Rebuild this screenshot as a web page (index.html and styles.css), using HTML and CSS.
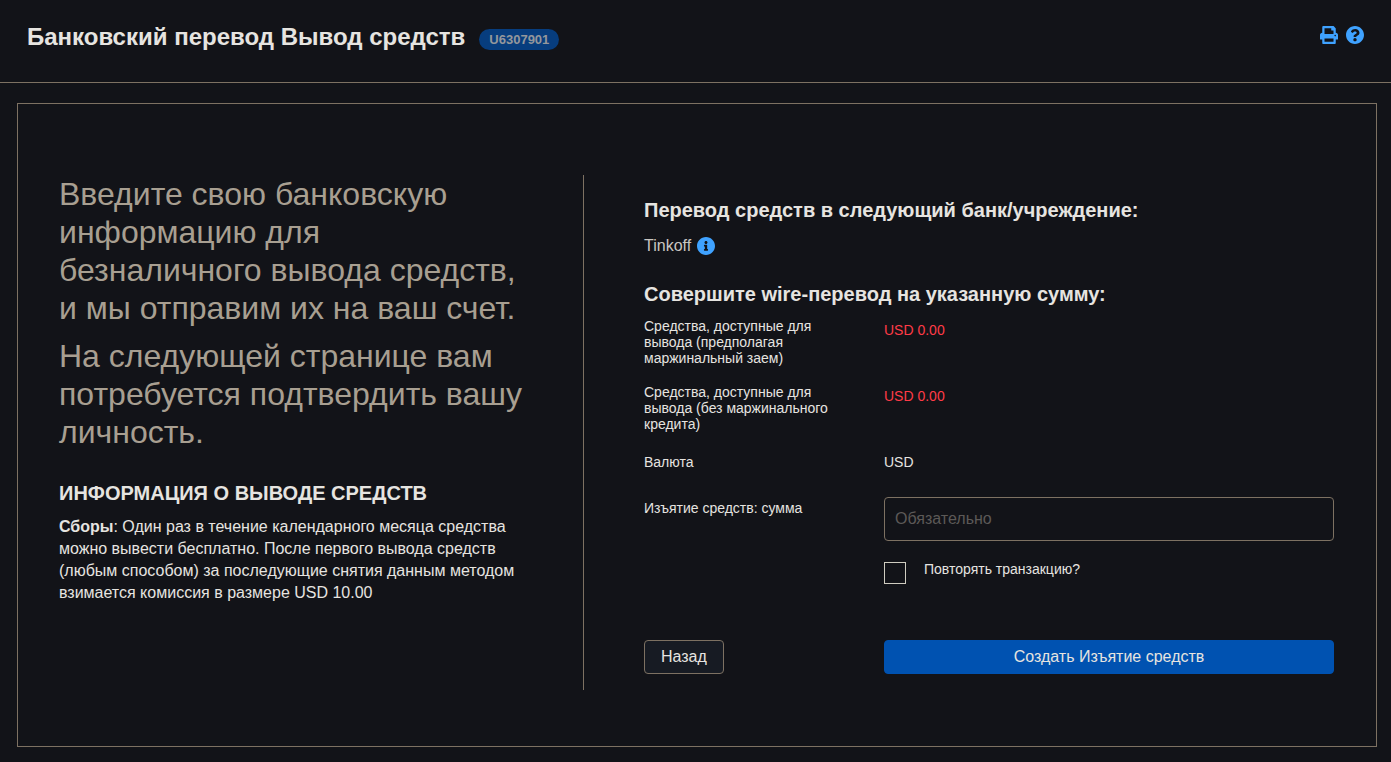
FILE: index.html
```html
<!DOCTYPE html>
<html lang="ru">

<head>
    <meta charset="UTF-8">
    <meta name="viewport" content="width=device-width, initial-scale=1.0">
    <title>Банковский перевод Вывод средств</title>
    <link rel="stylesheet" href="styles.css">
</head>

<body>
<header class="header">
    <h1 class="title">Банковский перевод Вывод средств</h1>
    <span class="account">U6307901</span>
    <div class="tools">
        <button type="button" class="icon-btn" aria-label="Печать">
            <svg viewBox="0 0 512 512"><path d="M448 192V77.25c0-8.49-3.37-16.62-9.37-22.63L393.37 9.37c-6-6-14.14-9.37-22.63-9.37H96C78.33 0 64 14.33 64 32v160c-35.35 0-64 28.65-64 64v112c0 8.84 7.16 16 16 16h48v96c0 17.67 14.33 32 32 32h320c17.67 0 32-14.33 32-32v-96h48c8.84 0 16-7.16 16-16V256c0-35.35-28.65-64-64-64zm-64 256H128v-96h256v96zm0-224H128V64h192v48c0 8.84 7.16 16 16 16h48v96zm48 72c-13.25 0-24-10.75-24-24 0-13.26 10.75-24 24-24s24 10.74 24 24c0 13.25-10.75 24-24 24z"/></svg>
        </button>
        <button type="button" class="icon-btn" aria-label="Помощь">
            <svg viewBox="8 8 496 496"><path d="M504 256c0 136.997-111.043 248-248 248S8 392.997 8 256C8 119.083 119.043 8 256 8s248 111.083 248 248zM262.655 90c-54.497 0-89.255 22.957-116.549 63.758-3.536 5.286-2.353 12.415 2.715 16.258l34.699 26.31c5.205 3.947 12.621 3.008 16.665-2.122 17.864-22.658 30.113-35.797 57.303-35.797 20.429 0 45.698 13.148 45.698 32.958 0 14.976-12.363 22.667-32.534 33.976C247.128 238.528 216 254.941 216 296v4c0 6.627 5.373 12 12 12h56c6.627 0 12-5.373 12-12v-1.333c0-28.462 83.186-29.647 83.186-106.667 0-58.002-60.165-102-116.531-102zM256 338c-25.365 0-46 20.635-46 46 0 25.364 20.635 46 46 46s46-20.636 46-46c0-25.365-20.635-46-46-46z"/></svg>
        </button>
    </div>
</header>

<main class="panel">
    <section class="info">
        <p class="lead">Введите свою банковскую информацию для<br>безналичного вывода средств, и&nbsp;мы отправим их на ваш счет.</p>
        <p class="lead">На следующей странице вам потребуется подтвердить вашу личность.</p>
        <h2 class="info-title">ИНФОРМАЦИЯ О ВЫВОДЕ СРЕДСТВ</h2>
        <p class="fees"><b>Сборы</b>: Один раз в течение календарного месяца средства можно вывести бесплатно. После первого вывода средств (любым способом) за последующие снятия данным методом взимается комиссия в размере USD 10.00</p>
    </section>

    <form class="transfer">
        <h2>Перевод средств в следующий банк/учреждение:</h2>
        <div class="bank">
            <span>Tinkoff</span>
            <button type="button" class="icon-btn" aria-label="Информация о банке">
                <svg viewBox="8 8 496 496"><path d="M256 8C119.043 8 8 119.083 8 256c0 136.997 111.043 248 248 248s248-111.003 248-248C504 119.083 392.957 8 256 8zm0 110c23.196 0 42 18.804 42 42s-18.804 42-42 42-42-18.804-42-42 18.804-42 42-42zm56 254c0 6.627-5.373 12-12 12h-88c-6.627 0-12-5.373-12-12v-24c0-6.627 5.373-12 12-12h12v-64h-12c-6.627 0-12-5.373-12-12v-24c0-6.627 5.373-12 12-12h64c6.627 0 12 5.373 12 12v100h12c6.627 0 12 5.373 12 12v24z"/></svg>
            </button>
        </div>
        <h2>Совершите wire-перевод на указанную сумму:</h2>

        <div class="row">
            <span class="label">Средства, доступные для вывода (предполагая маржинальный заем)</span>
            <span class="value negative">USD 0.00</span>
        </div>
        <div class="row">
            <span class="label">Средства, доступные для вывода (без маржинального кредита)</span>
            <span class="value negative">USD 0.00</span>
        </div>
        <div class="row row-currency">
            <span class="label">Валюта</span>
            <span class="value">USD</span>
        </div>
        <div class="row row-amount">
            <label class="label" for="amount">Изъятие средств: сумма</label>
            <input type="text" class="amount" id="amount" placeholder="Обязательно">
        </div>
        <div class="row">
            <div class="repeat">
                <input type="checkbox" class="check" id="repeat">
                <label for="repeat">Повторять транзакцию?</label>
            </div>
        </div>
        <div class="row actions">
            <button type="button" class="btn btn-back">Назад</button>
            <button type="submit" class="btn btn-primary">Создать Изъятие средств</button>
        </div>
    </form>
</main>
</body>

</html>
```
FILE: styles.css
```css
* {
    box-sizing: border-box;
    margin: 0;
    padding: 0;
}

body {
    background: #121318;
    color: #e6e4e0;
    font-family: "Liberation Sans", Arial, sans-serif;
    font-size: 14px;
    line-height: 16px;
}

button, input {
    font-family: inherit;
}

h2 {
    font-size: 20px;
    line-height: 24px;
}

/* header */
.header {
    display: flex;
    align-items: center;
    padding: 22px 27px 30px;
    border-bottom: 1px solid #7d7162;
}

.title {
    font-size: 24px;
    line-height: 30px;
}

.account {
    margin: 5px 0 0 14px;
    padding: 3px 10px 2px;
    border-radius: 11px;
    background: #073d7e;
    color: #94979c;
    font-size: 13px;
    font-weight: 700;
}

.tools {
    display: flex;
    gap: 8px;
    margin: 0 0 4px auto;
}

.icon-btn {
    width: 18px;
    height: 18px;
    border: 0;
    background: none;
    cursor: pointer;
}

.icon-btn svg {
    display: block;
    width: 18px;
    height: 18px;
    fill: #3fa2ff;
}

/* panel */
.panel {
    display: grid;
    grid-template-columns: 7fr 10fr;
    margin: 20px 14px 15px 17px;
    padding: 71px 42px 56px 41px;
    border: 1px solid #7d7162;
}

.info {
    padding-right: 60px;
    border-right: 1px solid #7d7162;
}

.lead {
    margin-bottom: 10px;
    color: #a89f91;
    font-size: 32px;
    line-height: 38px;
}

.info-title {
    margin: 30px 0 11px;
}

.fees {
    font-size: 16px;
    line-height: 22px;
}

.transfer {
    padding: 23px 0 16px 60px;
}

.bank {
    display: flex;
    align-items: center;
    gap: 6px;
    margin: 12px 0 24px;
    color: #c9c6c1;
    font-size: 16px;
    line-height: 24px;
}

.transfer h2 + .row {
    margin-top: 12px;
}

.row {
    display: grid;
    grid-template-columns: 240px 1fr;
    margin-bottom: 18px;
}

.label {
    max-width: 200px;
}

.value {
    padding-top: 4px;
}

.negative {
    color: #ff3b47;
}

.row-currency {
    min-height: 29px;
}

.row-currency .label {
    padding-top: 4px;
}

.row-amount {
    margin-bottom: 21px;
}

.row-amount .label {
    padding-top: 3px;
}

.amount {
    width: 100%;
    height: 44px;
    padding: 0 10px;
    border: 1px solid #7d7162;
    border-radius: 4px;
    background: transparent;
    color: #e6e4e0;
    font-size: 16px;
}

.amount::placeholder {
    color: #5c5957;
}

.repeat {
    display: flex;
    grid-column: 2;
    gap: 18px;
    line-height: 14px;
}

.check {
    width: 22px;
    height: 22px;
    border: 1px solid #cfccc0;
    appearance: none;
}

.check:checked {
    background: #0052b1;
}

.actions {
    margin: 56px 0 0;
}

.btn {
    height: 34px;
    padding: 0 16px;
    border: 1px solid #7d7162;
    border-radius: 4px;
    color: #e6e4e0;
    font-size: 16px;
    cursor: pointer;
}

.btn-back {
    justify-self: start;
    background: #171b23;
}

.btn-primary {
    border-color: #0052b1;
    background: #0052b1;
}
```
